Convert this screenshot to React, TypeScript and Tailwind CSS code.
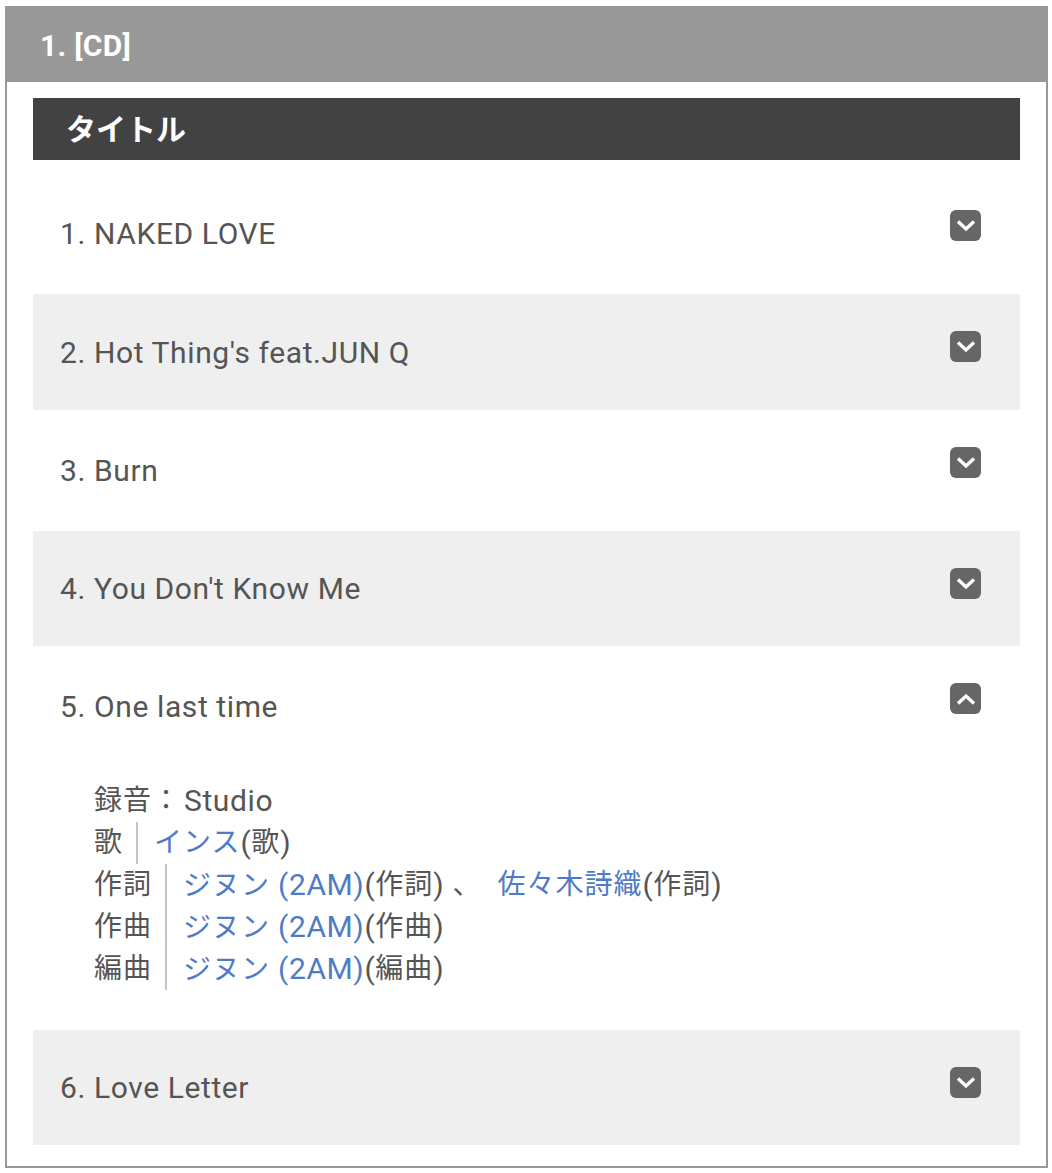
import React from "react";

const font = { fontFamily: 'Roboto, "Noto Sans CJK JP", sans-serif' };

type Track = { no: number; title: string; h: string; bg: string; open?: boolean };

const tracks: Track[] = [
  { no: 1, title: "NAKED LOVE", h: "h-[121px]", bg: "bg-white" },
  { no: 2, title: "Hot Thing's feat.JUN Q", h: "h-[116px]", bg: "bg-[#efefef]" },
  { no: 3, title: "Burn", h: "h-[121px]", bg: "bg-white" },
  { no: 4, title: "You Don't Know Me", h: "h-[115px]", bg: "bg-[#efefef]" },
  { no: 5, title: "One last time", h: "h-[121px]", bg: "bg-white", open: true },
  { no: 6, title: "Love Letter", h: "h-[115px]", bg: "bg-[#efefef]" },
];

function Toggle({ open }: { open?: boolean }) {
  return (
    <span className="mt-[37px] flex h-[31px] w-[31px] shrink-0 items-center justify-center rounded-[6px] bg-[#666666]">
      <svg width="20" height="12" viewBox="0 0 20 12">
        <path
          d={open ? "M2 10.5 L10 3 L18 10.5" : "M2 1.5 L10 9 L18 1.5"}
          fill="none"
          stroke="#fff"
          strokeWidth="3.4"
        />
      </svg>
    </span>
  );
}

// latin runs render a bit larger than the CJK glyphs in the original
const L = ({ children }: { children: React.ReactNode }) => (
  <span className="text-[30px] tracking-[0.6px]">{children}</span>
);

const Link = ({ children }: { children: React.ReactNode }) => (
  <span className="text-[#4f7bc6]">{children}</span>
);

function Credit({ label, children }: { label: string; children: React.ReactNode }) {
  return (
    <div className="flex h-[42px] items-center">
      <span>{label}</span>
      <span className="ml-[13px] flex h-full items-center whitespace-pre border-l-2 border-[#c4c4c4] pl-[16px]">
        {children}
      </span>
    </div>
  );
}

function Details() {
  return (
    <div className="mt-[13px] pb-[40px] pl-[61px] text-[28px] leading-[42px] tracking-[1px] text-[#555555]">
      <div className="flex h-[42px] items-center">
        録音：<span className="ml-[3px]"><L>Studio</L></span>
      </div>
      <Credit label="歌">
        <Link>インス</Link>
        <L>(</L>歌<L>)</L>
      </Credit>
      <Credit label="作詞">
        <Link>
          ジヌン<L> (2AM)</L>
        </Link>
        <L>(</L>作詞<L>) </L>、<span className="ml-[16px]" />
        <Link>佐々木詩織</Link>
        <L>(</L>作詞<L>)</L>
      </Credit>
      <Credit label="作曲">
        <Link>
          ジヌン<L> (2AM)</L>
        </Link>
        <L>(</L>作曲<L>)</L>
      </Credit>
      <Credit label="編曲">
        <Link>
          ジヌン<L> (2AM)</L>
        </Link>
        <L>(</L>編曲<L>)</L>
      </Credit>
    </div>
  );
}

export default function App() {
  return (
    <div className="min-h-[1173px] bg-white pl-[5px] pt-[6px]" style={font}>
      <div className="w-[1043px] border-2 border-[#999999]">
        <div className="flex h-[74px] items-center bg-[#999999] pl-[33px] text-[30px] font-bold tracking-[0.3px] text-white">
          1. [CD]
        </div>
        <div className="px-[26px] pb-[21px] pt-[16px]">
          <div className="flex h-[62px] items-center bg-[#424242] pl-[33px] text-[30px] font-bold text-white">
            タイトル
          </div>
          <div className="pt-[13px]">
            {tracks.map((t) => (
              <div key={t.no} className={t.bg}>
                <div className={`flex justify-between pl-[27px] pr-[39px] ${t.h}`}>
                  <span className="self-center text-[30px] tracking-[0.6px] text-[#555555]">
                    {t.no}. {t.title}
                  </span>
                  <Toggle open={t.open} />
                </div>
                {t.open && <Details />}
              </div>
            ))}
          </div>
        </div>
      </div>
    </div>
  );
}
